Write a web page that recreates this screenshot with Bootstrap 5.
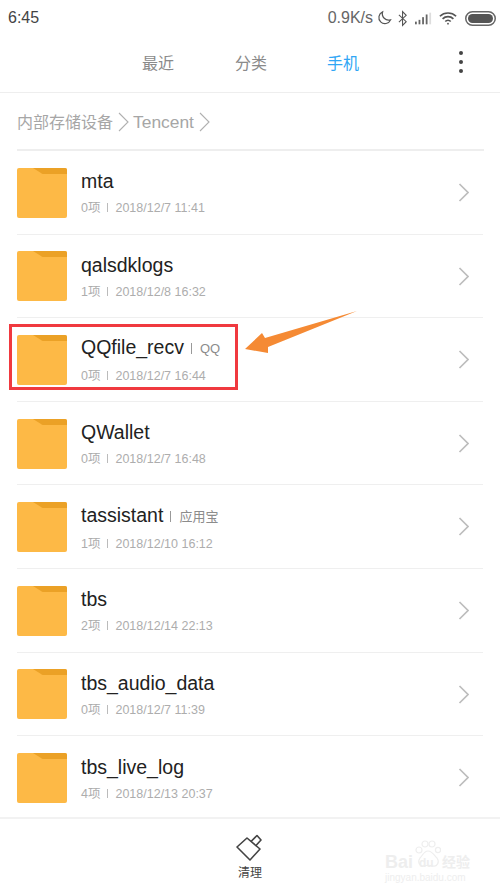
<!DOCTYPE html>
<html lang="zh">
<head>
<meta charset="utf-8">
<title>Files</title>
<link href="https://cdn.jsdelivr.net/npm/bootstrap@5.3.0/dist/css/bootstrap.min.css" rel="stylesheet">
<style>
html,body{margin:0;background:#fff;overflow:hidden}
.phone{position:relative;width:500px;height:894px;overflow:hidden;font-family:"Liberation Sans","Noto Sans CJK SC",sans-serif;background:#fff}
.stat{height:37px;padding:6px 4px 0 8px;color:#555}
.clock{font-size:16px;line-height:24px;color:#444}
.speed{font-size:16px;line-height:24px;color:#666}
.moon{margin-left:4px}
.bt{margin-left:6px}
.sig{margin-left:7px}
.wifi{margin-left:7px}
.batt{margin-left:8px}
.tabbar{height:56px;border-bottom:1px solid #eee;position:relative}
.tab-item{font-size:16px;line-height:22px;color:#8a8a8a;position:absolute;top:16px}
.tab-on{color:#2fa6f5}
.crumbs{height:58px;margin-left:17px;margin-right:16px;border-bottom:2px solid #eee;font-size:16px;color:#a6a6a6;padding-top:17px;line-height:24px}
.crumbs b{font-weight:400;font-size:17.4px}
.crumbs svg{vertical-align:-4px;margin:0 4px 0 5px}
.frow{height:83.6px;margin-left:17px;margin-right:17px;border-bottom:1px solid #efefef;position:relative}
.frow:last-child{border-bottom:0}
.ficon{width:50px;height:50px;flex:none;margin-right:14px;margin-top:1px}
.fname{font-size:19.5px;line-height:24px;color:#222;padding-top:2px}
.ftag{font-size:13px;color:#8c8c8c;margin-left:7px;vertical-align:1px}
.ftag::before{content:"";display:inline-block;width:1px;height:11px;background:#999;margin-right:8px;vertical-align:-1px}
.fmeta{font-size:12.5px;line-height:18px;color:#adadad;margin-top:6px}
.fmeta i{display:inline-block;width:1px;height:9px;background:#bbb;margin:0 7px}
.chev{position:absolute;right:14px;top:32px}
.foot{position:absolute;left:0;right:0;top:817px;height:77px;border-top:2px solid #f2f2f2;background:#fff;text-align:center}
.foot-label{font-size:12px;line-height:16px;color:#444;margin-top:3px;padding-left:0}
.foot svg{display:block;margin:15px 0 0 235px}
.redbox{position:absolute;left:9px;top:324px;width:229px;height:66px;border:3px solid #f0393f}
.arrow{position:absolute;left:245px;top:308px}
.wm{position:absolute;left:383px;top:838px;width:90px;height:46px;color:#eeeeee}
.wm-bai{position:absolute;left:2px;top:14px;font-size:18px;line-height:20px;font-weight:700}
.wm-du{position:absolute;left:36px;top:18px;font-size:12px;line-height:14px;font-weight:700}
.wm-cn{position:absolute;left:59px;top:15px;font-size:14px;line-height:18px;font-weight:700}
.wm-url{position:absolute;left:2px;top:34px;font-size:10px;line-height:11px}
.wm svg{position:absolute;left:32px;top:2px}
</style>
</head>
<body>
<div class="phone">
  <div class="stat d-flex justify-content-between align-items-start">
    <span class="clock">6:45</span>
    <div class="d-flex align-items-center">
      <span class="speed">0.9K/s</span>
      <svg class="moon" width="15" height="16" viewBox="0 0 16 16" fill="none" stroke="#555" stroke-width="1.3"><path d="M6 1.5a6.5 6.5 0 1 0 8.5 8.5A6.8 6.8 0 0 1 6 1.5z"/></svg>
      <svg class="bt" width="10" height="17" viewBox="0 0 11 17" fill="none" stroke="#555" stroke-width="1.2"><path d="M1 4.5l8 7.5-4 4V1l4 4-8 7.5"/></svg>
      <svg class="sig" width="17" height="13" viewBox="0 0 19 13" fill="#666"><rect x="0" y="10" width="2" height="3"/><rect x="4" y="8" width="2" height="5"/><rect x="8" y="5" width="2" height="8"/><rect x="12" y="2" width="2" height="11"/><rect x="16" y="0" width="2" height="13" fill="#ddd"/></svg>
      <svg class="wifi" width="18" height="15" viewBox="0 0 20 15" fill="none" stroke="#555" stroke-width="1.9"><path d="M1 5a13 13 0 0 1 18 0M4 8a8.5 8.5 0 0 1 12 0M7 10.8a4 4 0 0 1 6 0"/><circle cx="10" cy="13.3" r="1" fill="#555" stroke="none"/></svg>
      <svg class="batt" width="31" height="15" viewBox="0 0 31 15"><rect x=".75" y=".75" width="29.5" height="13.5" rx="6.7" fill="none" stroke="#666" stroke-width="1.5"/><rect x="3" y="3" width="25" height="9" rx="4.5" fill="#555"/></svg>
    </div>
  </div>
  <div class="tabbar">
    <span class="tab-item" style="left:142px">最近</span>
    <span class="tab-item" style="left:235px">分类</span>
    <span class="tab-item tab-on" style="left:327px">手机</span>
    <svg class="position-absolute" style="left:458px;top:13px" width="6" height="24" viewBox="0 0 6 24" fill="#444"><circle cx="3" cy="3" r="2"/><circle cx="3" cy="12" r="2"/><circle cx="3" cy="21" r="2"/></svg>
  </div>
  <div class="crumbs">内部存储设备<svg width="11" height="20" viewBox="0 0 11 20" fill="none" stroke="#b0b0b0" stroke-width="1.1"><path d="M1 1l9 9-9 9"/></svg><b>Tencent</b><svg width="11" height="20" viewBox="0 0 11 20" fill="none" stroke="#b0b0b0" stroke-width="1.1"><path d="M1 1l9 9-9 9"/></svg></div>

  <div id="rows"></div>

  <div class="redbox"></div>
  <svg class="arrow" width="115" height="48" viewBox="0 0 115 48"><path d="M112 3 L20 30 L17 25 L0 41 L23 45 L23 39Z" fill="#f58a34"/></svg>

  <div class="foot">
    <svg width="30" height="28" viewBox="0 0 30 28" fill="none" stroke="#444" stroke-width="1.6" stroke-linejoin="round"><path d="M2 13L12 4 25 15 15 26z"/><path d="M16 7.5L22 1.5 26 6 20.5 12"/></svg>
    <div class="foot-label">清理</div>
  </div>
  <div class="wm">
    <svg width="26" height="30" viewBox="0 0 26 30" fill="none" stroke="#eeeeee" stroke-width="1.2"><circle cx="4" cy="10" r="3"/><circle cx="10" cy="4" r="3"/><circle cx="17" cy="4" r="3"/><circle cx="23" cy="10" r="2.6"/><path d="M13 11c-4 0-5 4-8 7-3 4 0 9 4 8 3-1 6-1 9 0 4 1 7-4 4-8-3-3-5-7-9-7z"/></svg>
    <span class="wm-bai">Bai</span><span class="wm-du">du</span><span class="wm-cn">经验</span><span class="wm-url">jingyan.baidu.com</span>
  </div>
</div>
<script>
var data=[["mta","","0项","2018/12/7 11:41"],["qalsdklogs","","1项","2018/12/8 16:32"],["QQfile_recv","QQ","0项","2018/12/7 16:44"],["QWallet","","0项","2018/12/7 16:48"],["tassistant","应用宝","1项","2018/12/10 16:12"],["tbs","","2项","2018/12/14 22:13"],["tbs_audio_data","","0项","2018/12/7 11:39"],["tbs_live_log","","4项","2018/12/13 20:37"]];
document.getElementById("rows").innerHTML=data.map(function(d){
return '<div class="frow d-flex align-items-center">'+
'<svg class="ficon" viewBox="0 0 50 50"><path d="M2 0H48a2 2 0 0 1 2 2V48a2 2 0 0 1-2 2H2a2 2 0 0 1-2-2V2a2 2 0 0 1 2-2z" fill="#fdb946"/><path d="M16 0H48a2 2 0 0 1 2 2V6H26a3 3 0 0 1-2-1z" fill="#eba126"/></svg>'+
'<div><div class="fname">'+d[0]+(d[1]?'<span class="ftag">'+d[1]+'</span>':'')+'</div><div class="fmeta">'+d[2]+'<i></i>'+d[3]+'</div></div>'+
'<svg class="chev" width="11" height="19" viewBox="0 0 11 19" fill="none" stroke="#bdbdbd" stroke-width="1.7"><path d="M1.5 1l8.5 8.5-8.5 8.5"/></svg></div>';
}).join("");
</script>
<script src="https://cdn.jsdelivr.net/npm/bootstrap@5.3.0/dist/js/bootstrap.bundle.min.js"></script>
</body>
</html>
